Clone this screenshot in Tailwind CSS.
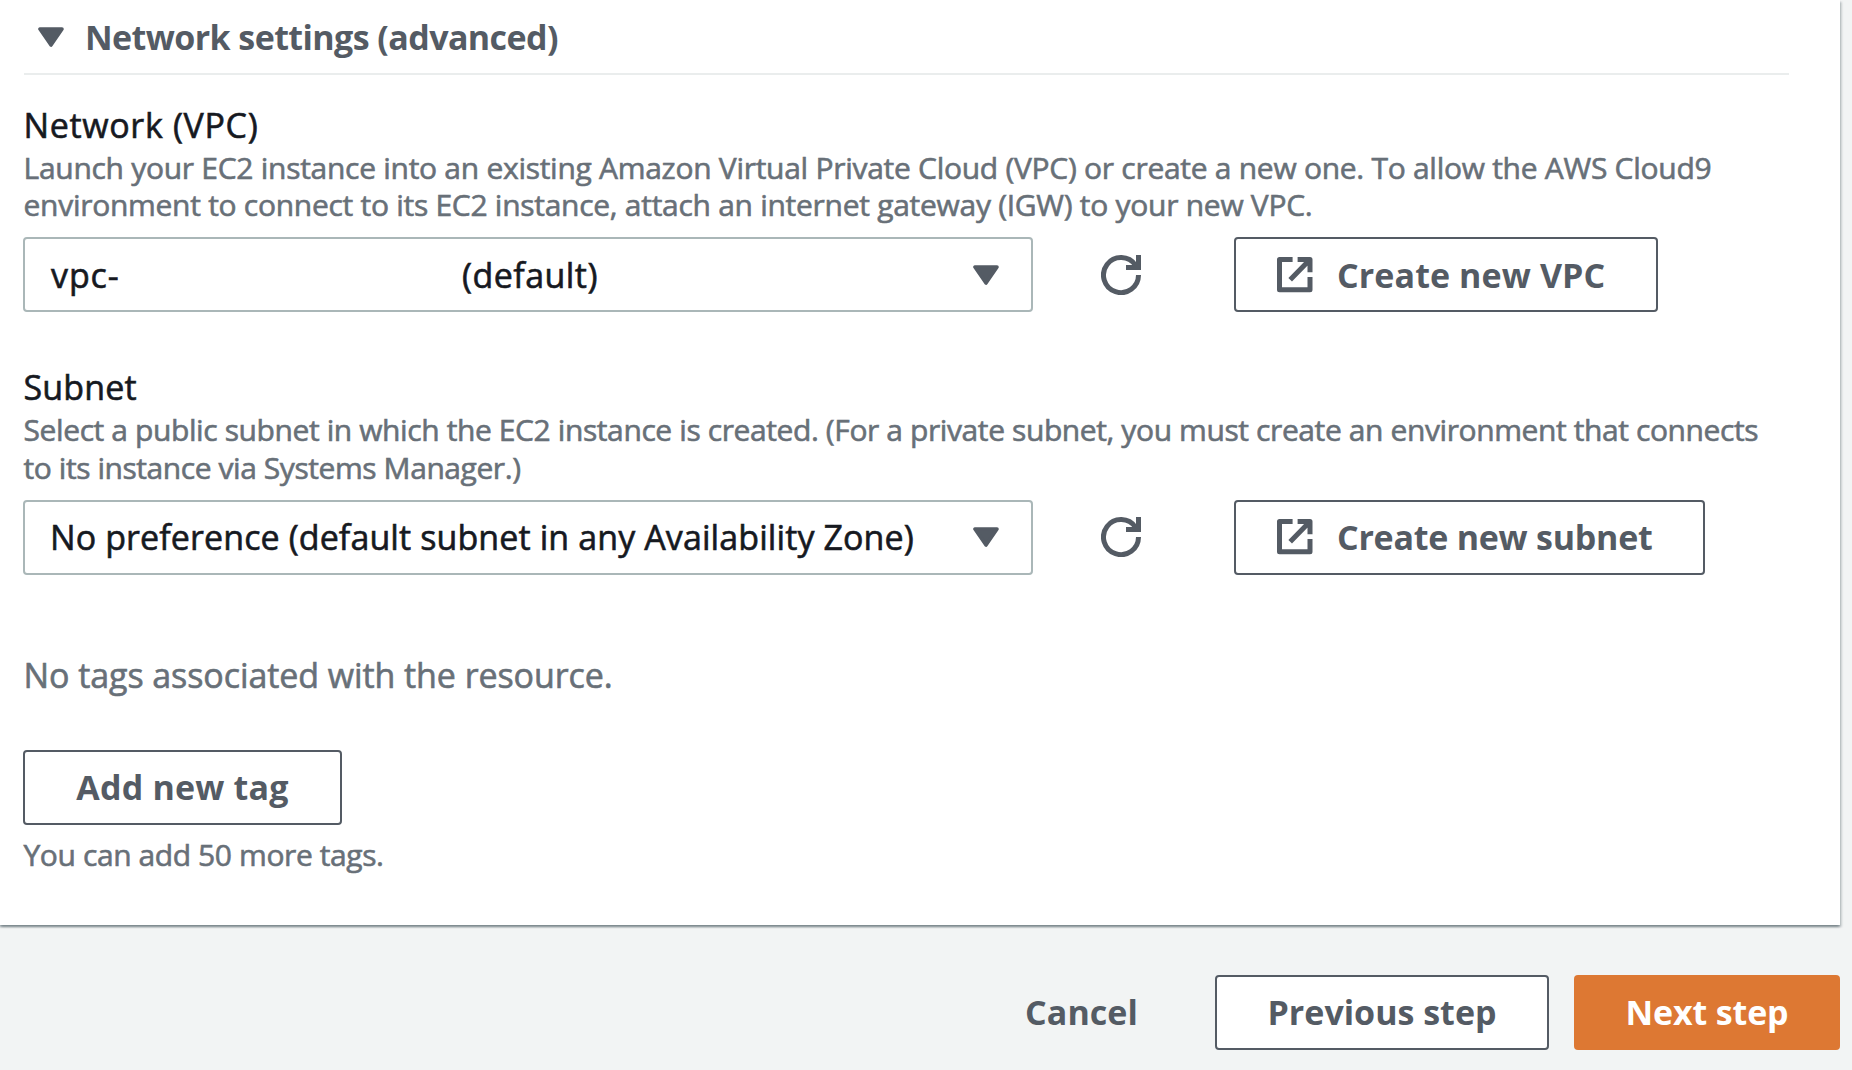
<!DOCTYPE html>
<html lang="en">
<head>
<meta charset="utf-8">
<title>Network settings</title>
<script src="https://cdn.jsdelivr.net/npm/@tailwindcss/browser@4"></script>
</head>
<body class="h-[1070px] w-[1852px] overflow-hidden bg-[#f2f4f4] font-['Open_Sans','Noto_Sans',sans-serif] text-[34px] leading-[40px] whitespace-nowrap text-[#16191f]">
<svg class="hidden">
  <symbol id="caret" viewBox="0 0 26 20"><path d="M2 2H24L13 18Z" fill="#545b64" stroke="#545b64" stroke-width="3.6" stroke-linejoin="round"/></symbol>
  <symbol id="refresh" viewBox="0 0 40 40"><path d="M37.5 20A17.5 17.5 0 1 1 34.5 10.3M37.5 0V12.5H25" fill="none" stroke="#545b64" stroke-width="5"/></symbol>
  <symbol id="external" viewBox="0 0 36 36"><path d="M15.6 2.5H2.5V32.7H33V20M20.6 2.5H33V15.2M32.5 3L13.2 22.8" fill="none" stroke="#545b64" stroke-width="5" stroke-linejoin="round"/></symbol>
</svg>
<main class="h-[925px] w-[1840px] bg-white pl-[23px] shadow-[0_2px_2px_0_rgba(0,28,36,0.3),2px_2px_2px_0_rgba(0,28,36,0.15),-2px_2px_2px_0_rgba(0,28,36,0.15)] [-webkit-text-stroke-width:0.6px]">
  <h2 class="mr-[51px] ml-px flex h-[75px] items-center border-b-2 border-[#eaeded] pl-[14px] font-bold text-[#545b64] [-webkit-text-stroke-width:0px]">
    <svg class="mr-[21px] h-5 w-[26px]"><use href="#caret"/></svg>
    <span class="pt-px tracking-[-0.58px]">Network settings (advanced)</span>
  </h2>

  <section class="pt-[30px]">
    <h3 class="pl-[0.5px] tracking-[0.65px]">Network (VPC)</h3>
    <p class="mt-[3.5px] pl-[0.5px] text-[30px] leading-[37.5px] text-[#687078]"><span class="tracking-[-0.28px]">Launch your EC2 instance into an existing Amazon Virtual Private Cloud (VPC) or create a new one. To allow the AWS Cloud9</span><br><span class="tracking-[-0.28px]">environment to connect to its EC2 instance, attach an internet gateway (IGW) to your new VPC.</span></p>
    <div class="mt-[13.5px] flex items-center">
      <div class="flex h-[75px] w-[1010px] items-center rounded-[4px] border-2 border-[#aab7b8] pr-[32px] pl-[26px]">
        <span class="w-[411px] tracking-[0.9px]">vpc-</span><span class="tracking-[0.45px]">(default)</span>
        <svg class="ml-auto h-5 w-[26px]"><use href="#caret"/></svg>
      </div>
      <svg class="ml-[68px] size-10"><use href="#refresh"/></svg>
      <button class="ml-[93px] flex h-[75px] w-[424px] items-center rounded-[4px] border-2 border-[#545b64] pl-[41px] font-bold text-[#545b64] [-webkit-text-stroke-width:0px]"><svg class="mr-[24px] size-9"><use href="#external"/></svg><span class="tracking-[0.1px]">Create new VPC</span></button>
    </div>
  </section>

  <section class="pt-[55px]">
    <h3 class="pl-[0.5px] tracking-[0.15px]">Subnet</h3>
    <p class="mt-[4px] pl-[0.5px] text-[30px] leading-[37.5px] text-[#687078]"><span class="tracking-[-0.395px]">Select a public subnet in which the EC2 instance is created. (For a private subnet, you must create an environment that connects</span><br><span class="tracking-[-0.43px]">to its instance via Systems Manager.)</span></p>
    <div class="mt-[14px] flex items-center">
      <div class="flex h-[75px] w-[1010px] items-center rounded-[4px] border-2 border-[#aab7b8] pr-[32px] pb-[2px] pl-[25px]">
        <span class="tracking-[0.1px]">No preference (default subnet in any Availability Zone)</span>
        <svg class="ml-auto h-5 w-[26px] shrink-0"><use href="#caret"/></svg>
      </div>
      <svg class="mb-[2px] ml-[68px] size-10"><use href="#refresh"/></svg>
      <button class="ml-[93px] flex h-[75px] w-[471px] items-center rounded-[4px] border-2 border-[#545b64] pb-[2px] pl-[41px] font-bold text-[#545b64] [-webkit-text-stroke-width:0px]"><svg class="mr-[24px] size-9"><use href="#external"/></svg><span class="tracking-[-0.25px]">Create new subnet</span></button>
    </div>
  </section>

  <section class="pt-[80px] text-[#687078]">
    <p class="pl-[0.5px] tracking-[-0.08px]">No tags associated with the resource.</p>
    <button class="mt-[55px] flex h-[75px] w-[319px] items-center justify-center rounded-[4px] border-2 border-[#545b64] pb-[2px] font-bold tracking-[0.2px] text-[#545b64] [-webkit-text-stroke-width:0px]">Add new tag</button>
    <p class="mt-[10px] pl-[0.5px] text-[30px] tracking-[-0.4px]">You can add 50 more tags.</p>
  </section>
</main>

<footer class="flex w-[1840px] items-center justify-end pt-[50px] font-bold text-[#545b64]">
  <button class="mr-[77px] pb-[2px] tracking-[0.08px]">Cancel</button>
  <button class="mr-[25px] h-[75px] w-[334px] rounded-[4px] border-2 border-[#545b64] bg-white pb-[2px]">Previous step</button>
  <button class="h-[75px] w-[266px] rounded-[4px] bg-[#dd7833] pb-[2px] tracking-[-0.15px] text-white">Next step</button>
</footer>
</body>
</html>
